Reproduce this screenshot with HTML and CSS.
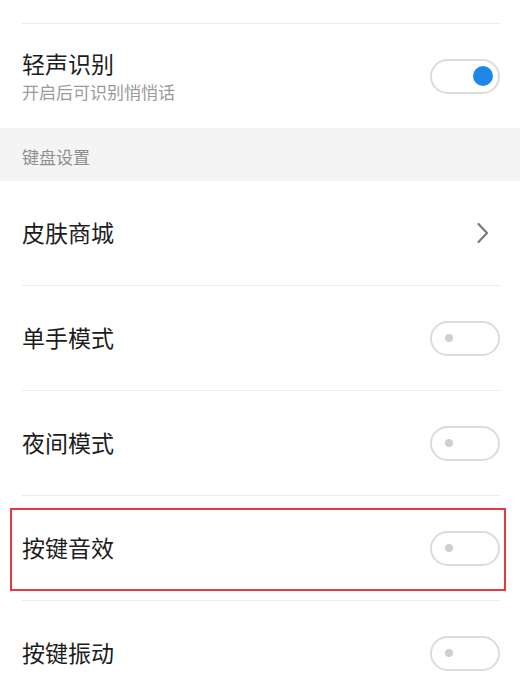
FILE: index.html
```html
<!DOCTYPE html>
<html lang="zh">
<head>
<meta charset="utf-8">
<link rel="stylesheet" href="styles.css">
</head>
<body>
<div class="page">
  <div class="top-space"></div>
  <div class="row row-first">
    <div class="texts">
      <div class="title">轻声识别</div>
      <div class="sub">开启后可识别悄悄话</div>
    </div>
    <div class="toggle on"><span class="knob"></span></div>
  </div>
  <div class="section">键盘设置</div>
  <div class="row">
    <div class="title">皮肤商城</div>
    <svg class="chev" width="14" height="22" viewBox="0 0 14 22"><path d="M2.5 2 L11 11 L2.5 20" fill="none" stroke="#7a7a7a" stroke-width="2.2" stroke-linecap="round" stroke-linejoin="round"/></svg>
  </div>
  <div class="row">
    <div class="title">单手模式</div>
    <div class="toggle"><span class="knob"></span></div>
  </div>
  <div class="row">
    <div class="title">夜间模式</div>
    <div class="toggle"><span class="knob"></span></div>
  </div>
  <div class="row highlighted">
    <div class="title">按键音效</div>
    <div class="toggle"><span class="knob"></span></div>
    <div class="mark"></div>
  </div>
  <div class="row">
    <div class="title">按键振动</div>
    <div class="toggle"><span class="knob"></span></div>
  </div>
</div>
</body>
</html>
```

FILE: styles.css
```css
html, body {
  margin: 0;
  padding: 0;
  background: #ffffff;
}
body {
  font-family: "Noto Sans CJK SC", "Noto Sans", sans-serif;
  color: #222222;
  overflow: hidden;
}
.page {
  width: 520px;
  height: 690px;
  overflow: hidden;
}
.top-space {
  height: 24px;
  margin: 0 20px 0 22px;
  border-bottom: 1px solid #ececec;
  box-sizing: border-box;
}
.row {
  position: relative;
  height: 105px;
  box-sizing: border-box;
  margin: 0 20px 0 22px;
  border-bottom: 1px solid #ececec;
  display: flex;
  align-items: center;
  justify-content: space-between;
}
.row .title {
  margin-bottom: 3px;
}
.row-first {
  height: 104px;
  border-bottom: none;
}
.row-first .title {
  margin-bottom: 0;
}
.texts {
  display: flex;
  flex-direction: column;
  gap: 4px;
}
.title {
  font-size: 23px;
  line-height: 28px;
  color: #1c1c1c;
}
.sub {
  font-size: 17px;
  line-height: 22px;
  color: #9a9a9a;
}
.section {
  height: 53px;
  box-sizing: border-box;
  background: #f4f4f4;
  padding: 18px 22px 0;
  font-size: 17px;
  line-height: 22px;
  color: #8e8e8e;
}
.toggle {
  position: relative;
  width: 70px;
  height: 35px;
  box-sizing: border-box;
  border: 2px solid #dcdcdc;
  border-radius: 18px;
  background: #fff;
}
.toggle .knob {
  position: absolute;
  left: 13px;
  top: 11.5px;
  width: 8px;
  height: 8px;
  border-radius: 50%;
  background: #cfcfcf;
}
.toggle.on .knob {
  left: auto;
  right: 5px;
  top: 5.5px;
  width: 20px;
  height: 20px;
  background: #1e88e8;
}
.chev {
  margin-right: 10px;
}
.mark {
  position: absolute;
  left: -12px;
  right: -6px;
  top: 12px;
  bottom: 9px;
  border: 2px solid #e5383f;
  pointer-events: none;
}
```
